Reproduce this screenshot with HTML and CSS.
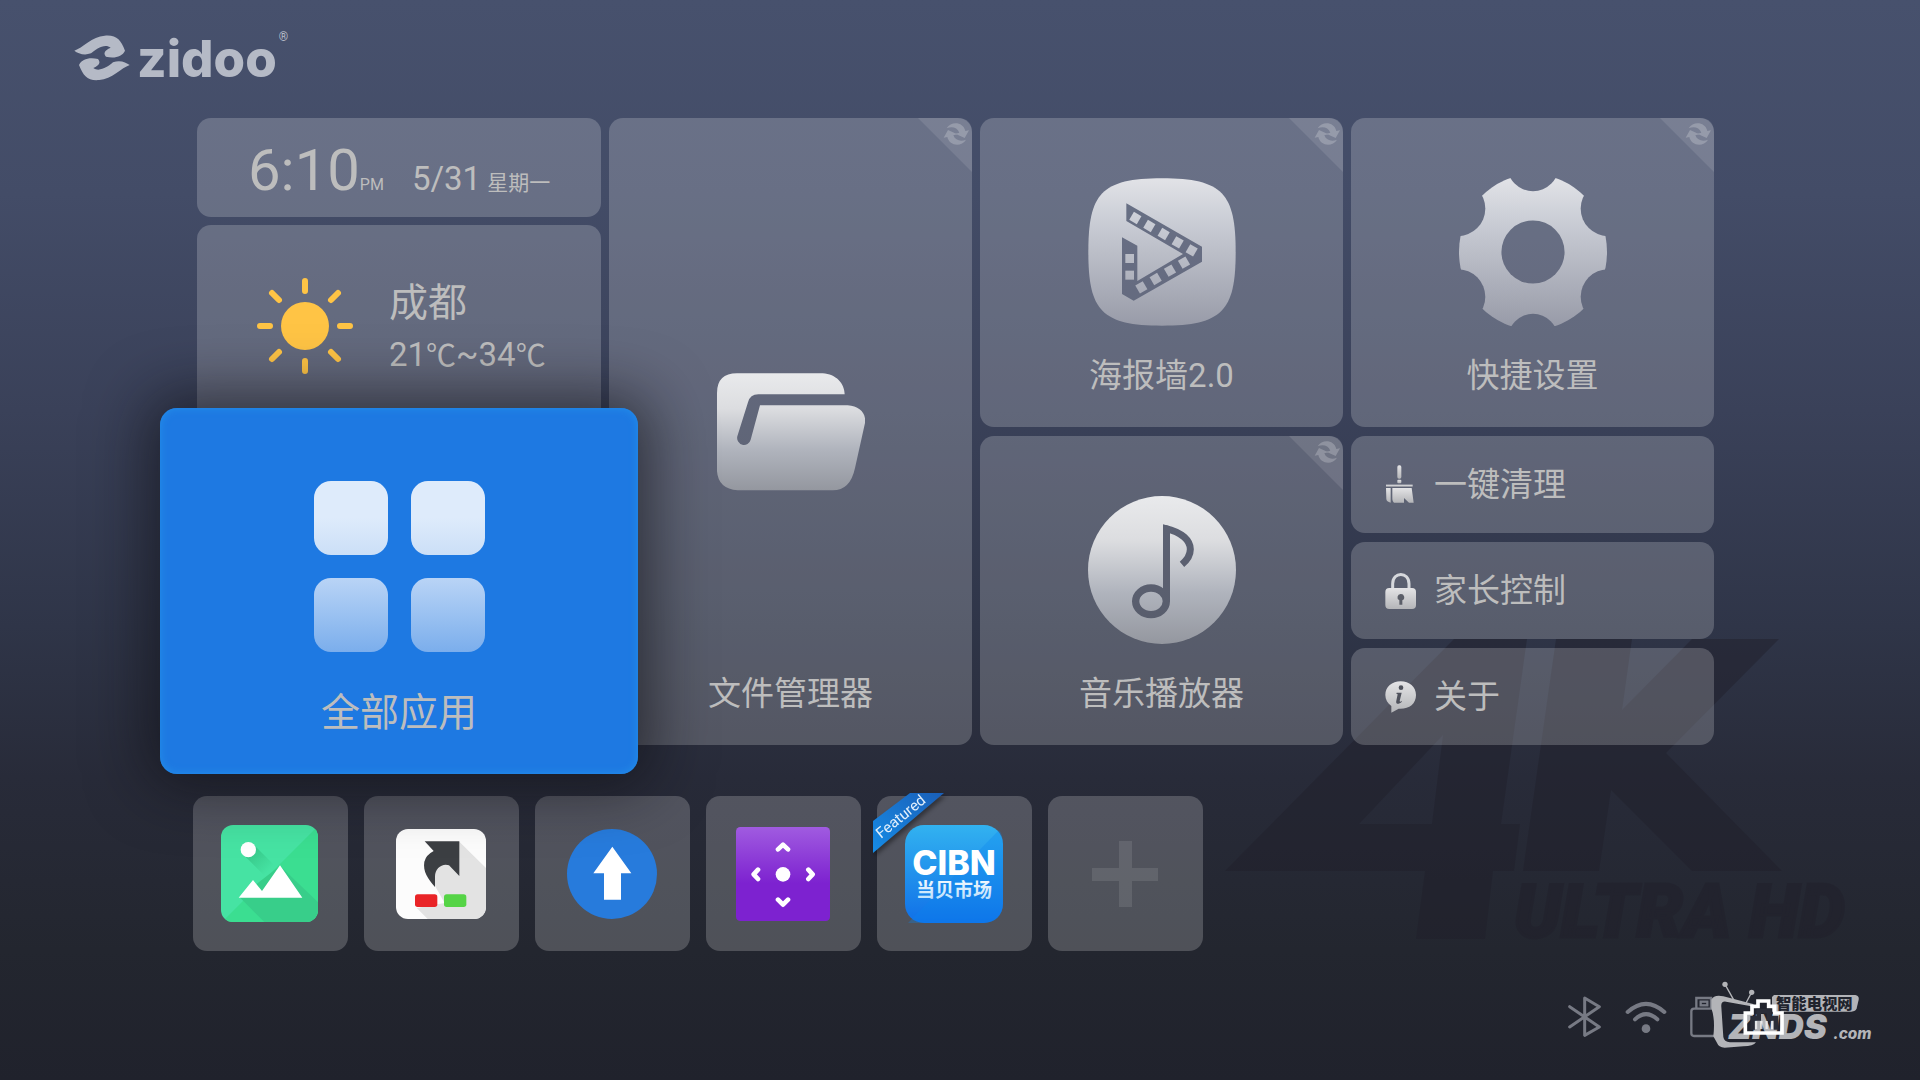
FILE: index.html
```html
<!DOCTYPE html>
<html lang="zh-CN">
<head>
<meta charset="utf-8">
<title>Zidoo</title>
<link rel="stylesheet" href="styles.css">
</head>
<body>
<svg class="defs" width="0" height="0" aria-hidden="true">
  <defs>
    <linearGradient id="metal" x1="0" y1="0" x2="0" y2="1">
      <stop offset="0" stop-color="#e2e3e7"/><stop offset=".25" stop-color="#cdd0d8"/><stop offset="1" stop-color="#989ba8"/>
    </linearGradient>
    <linearGradient id="silver" x1="0" y1="0" x2="0" y2="1">
      <stop offset="0" stop-color="#e9eaec"/><stop offset=".3" stop-color="#dcdde0"/><stop offset=".65" stop-color="#b0b4bd"/><stop offset="1" stop-color="#94979f"/>
    </linearGradient>
    <linearGradient id="small" x1="0" y1="0" x2="0" y2="1">
      <stop offset="0" stop-color="#e4e4e6"/><stop offset="1" stop-color="#b4b5b8"/>
    </linearGradient>
    <symbol id="sync" viewBox="0 0 162 162">
      <path class="sync-corner" d="M0 0H120Q162 0 162 44V162Z"/>
      <g class="sync-arrows">
        <path d="M86 31C100 8 136 12 142 39L153 37L140 60L112 47L124 44C118 28 101 24 86 31Z"/>
        <path d="M86 31C100 8 136 12 142 39L153 37L140 60L112 47L124 44C118 28 101 24 86 31Z" transform="rotate(180 115 48)"/>
      </g>
    </symbol>
  </defs>
</svg>

<svg class="backdrop" viewBox="0 0 670 340" aria-hidden="true">
  <path fill-rule="evenodd" d="M239 9H312L286 194H305L299 241H278L270 309H201L210 241H10ZM228 105L144 194H217Z"/>
  <path d="M341 9H417L407 80L477 9H564L451 123L567 241H477L396 160L384 241H308Z"/>
  <text x="299" y="307">ULTRA HD</text>
</svg>

<header class="brand">
  <svg class="brand-mark" viewBox="0 0 168 140" aria-hidden="true">
    <path d="M1 48C25 40 55 5 92 3C128 0 140 15 153 48C145 66 122 72 96 66C88 56 90 48 110 39C92 25 65 44 51 56C30 64 12 56 1 48Z"/>
    <path d="M167 91C143 99 113 134 76 136C40 139 28 124 15 91C23 73 46 67 72 73C80 83 78 91 58 100C76 114 103 95 117 83C138 75 156 83 167 91Z"/>
  </svg>
  <span class="brand-name">zidoo</span><span class="brand-reg">®</span>
</header>

<main>
  <section class="board">
    <div class="stack">
      <div class="card clock">
        <time class="clock-time">6:10</time><span class="clock-ampm">PM</span>
        <span class="clock-date">5/31</span><span class="clock-day">星期一</span>
      </div>
      <div class="card weather">
        <svg class="sun" viewBox="0 0 96 96" aria-hidden="true">
          <circle cx="48" cy="48" r="24"/>
          <path d="M48 3V13M48 83V93M3 48H13M83 48H93M15 15L22 22M74 74L81 81M81 15L74 22M22 74L15 81"/>
        </svg>
        <div class="weather-text"><span class="city">成都</span><span class="temp">21<span class="unit">℃</span>~34<span class="unit">℃</span></span></div>
      </div>
    </div>

    <button class="card tile tile-tall">
      <svg class="sync"><use href="#sync"/></svg>
      <svg class="folder" viewBox="108 101 444 352" aria-hidden="true"><path fill="url(#silver)" d="M108 160Q108 101 168 101H425C465 103 491 132 491 164H232Q207 164 201 188L169 290A20 20 0 0 0 209 300L237 197H500C535 199 556 220 552 250L522 385Q508 452 455 452H170Q112 448 108 395Z"/></svg>
      <span class="label">文件管理器</span>
    </button>

    <button class="card tile">
      <svg class="sync"><use href="#sync"/></svg>
      <svg class="icon" viewBox="0 0 444 444" aria-hidden="true">
        <mask id="film">
          <path fill="#fff" d="M222 1C405 1 443 48 443 222S405 443 222 443S1 396 1 222S39 1 222 1Z"/>
          <path fill="#000" d="M115 76L342 206V251L137 368L102 348V178L148 203V309L285 228L115 129Z"/>
          <g fill="#fff">
            <rect x="129" y="106" width="26" height="28" transform="rotate(30 142 120)"/>
            <rect x="171" y="130" width="26" height="28" transform="rotate(30 184 144)"/>
            <rect x="214" y="154" width="26" height="28" transform="rotate(30 227 168)"/>
            <rect x="256" y="179" width="26" height="28" transform="rotate(30 269 193)"/>
            <rect x="298" y="203" width="26" height="28" transform="rotate(30 311 217)"/>
            <rect x="275" y="240" width="26" height="28" transform="rotate(-30 288 254)"/>
            <rect x="233" y="264" width="26" height="28" transform="rotate(-30 246 278)"/>
            <rect x="190" y="289" width="26" height="28" transform="rotate(-30 203 303)"/>
            <rect x="147" y="314" width="26" height="28" transform="rotate(-30 160 328)"/>
            <rect x="112" y="228" width="26" height="27"/><rect x="112" y="278" width="26" height="27"/>
          </g>
        </mask>
        <rect width="444" height="444" fill="url(#metal)" mask="url(#film)"/>
      </svg>
      <span class="label">海报墙2.0</span>
    </button>

    <button class="card tile">
      <svg class="sync"><use href="#sync"/></svg>
      <svg class="icon" viewBox="-225 -225 450 450" aria-hidden="true">
        <mask id="gear" maskUnits="userSpaceOnUse" x="-230" y="-240" width="460" height="480">
          <ellipse rx="225" ry="236" fill="#fff"/>
          <circle r="96"/><circle cy="-264" r="79"/><circle cy="264" r="76"/>
          <circle cx="229" cy="-132" r="84"/><circle cx="229" cy="136" r="84"/>
          <circle cx="-229" cy="-132" r="84"/><circle cx="-229" cy="136" r="84"/>
        </mask>
        <rect x="-225" y="-225" width="450" height="450" fill="url(#metal)" mask="url(#gear)"/>
      </svg>
      <span class="label">快捷设置</span>
    </button>

    <button class="tile tile-focus">
      <svg class="grid-icon" viewBox="0 0 171 171" aria-hidden="true">
        <linearGradient id="g1" x1="0" y1="0" x2="0" y2="1"><stop offset=".5" stop-color="#deebfb"/><stop offset="1" stop-color="#cbdff7"/></linearGradient>
        <linearGradient id="g2" x1="0" y1="0" x2="0" y2="1"><stop offset="0" stop-color="#b9d4f6"/><stop offset="1" stop-color="#7baeec"/></linearGradient>
        <rect width="74" height="74" rx="17" fill="url(#g1)"/><rect x="97" width="74" height="74" rx="17" fill="url(#g1)"/>
        <rect y="97" width="74" height="74" rx="17" fill="url(#g2)"/><rect x="97" y="97" width="74" height="74" rx="17" fill="url(#g2)"/>
      </svg>
      <span class="label">全部应用</span>
    </button>

    <button class="card tile">
      <svg class="sync"><use href="#sync"/></svg>
      <svg class="icon" viewBox="381 197 444 444" aria-hidden="true">
        <mask id="note" maskUnits="userSpaceOnUse" x="381" y="197" width="444" height="444">
          <circle cx="603" cy="419" r="222" fill="#fff"/>
          <path d="M606 282L627 288V513H606Z"/>
          <path d="M612 294C665 306 688 332 688 357C688 374 680 388 663 402" fill="none" stroke="#000" stroke-width="21"/>
          <ellipse cx="570" cy="513" rx="46" ry="40" fill="none" stroke="#000" stroke-width="22"/>
        </mask>
        <rect x="381" y="197" width="444" height="444" fill="url(#silver)" mask="url(#note)"/>
      </svg>
      <span class="label">音乐播放器</span>
    </button>

    <div class="shortcuts">
      <button class="card shortcut">
        <svg viewBox="0 0 96 120" aria-hidden="true"><g fill="url(#small)"><rect x="37" y="1" width="12" height="40" rx="5"/><rect x="37" y="44" width="12" height="11" rx="3"/><rect x="3" y="59" width="80" height="6"/><path d="M3 69H17V113C9 111 4 108 4 102ZM22 69H80L86 113H72L57 99V113H27C22 109 22 102 22 98Z"/></g></svg>
        <span>一键清理</span>
      </button>
      <button class="card shortcut">
        <svg viewBox="0 0 96 120" aria-hidden="true"><path d="M23 58V38C23 1 72 1 72 38V58" fill="none" stroke="#d6d8dc" stroke-width="9"/><rect x="1" y="51" width="92" height="63" rx="12" fill="url(#small)"/><path d="M47 69A10 10 0 0 1 52 88V101H43V88A10 10 0 0 1 47 69Z" fill="#5b5e68"/></svg>
        <span>家长控制</span>
      </button>
      <button class="card shortcut">
        <svg viewBox="0 0 96 120" aria-hidden="true"><path d="M47 13C73 13 93 29 93 54C93 82 71 97 41 95L19 107V87C8 79 1 68 1 54C1 29 21 13 47 13Z" fill="url(#small)"/><circle cx="48" cy="32" r="7" fill="#4f525c"/><path d="M35 47H50L44 72Q45 77 51 71L50 75C40 84 31 81 34 71L38 52L34 50Z" fill="#4f525c"/></svg>
        <span>关于</span>
      </button>
    </div>
  </section>

  <nav class="dock" aria-label="Apps">
    <button class="card app" aria-label="Gallery">
      <svg width="97" height="97" viewBox="0 0 291 291">
        <clipPath id="c1"><rect width="291" height="291" rx="36"/></clipPath>
        <linearGradient id="s1" gradientUnits="userSpaceOnUse" x1="90" y1="80" x2="145" y2="135"><stop stop-color="#37c98a"/><stop offset="1" stop-color="#37c98a" stop-opacity="0"/></linearGradient>
        <g clip-path="url(#c1)"><rect width="291" height="291" fill="#46e3a3"/><path d="M291 3V291H3Z" fill="#3bde91"/>
          <path d="M99 60L160 121L130 152L66 88Z" fill="url(#s1)"/><path d="M177 122L291 232V291H130L56 217Z" fill="#38ce8a"/></g>
        <circle cx="82" cy="74" r="23" fill="#fff"/><path d="M53 218L96 165L123 198L177 121L244 218Z" fill="#fff"/>
      </svg>
    </button>
    <button class="card app" aria-label="Switch">
      <svg width="90" height="90" viewBox="0 0 270 270">
        <clipPath id="c2"><rect width="270" height="270" rx="36"/></clipPath>
        <g clip-path="url(#c2)"><rect width="270" height="270" fill="#fcfcfc"/><path d="M190 38L270 117V270H95L62 237L142 218L117 173L110 120Z" fill="#e3e3e3"/><path d="M57 232L117 171L146 222L62 237Z" fill="#fcfcfc"/></g>
        <path d="M86 37H190V141L159 109C138 102 117 119 117 142V174C96 149 80 128 85 98Q90 78 113 66Z" fill="#3c3f43"/>
        <rect x="57" y="196" width="67" height="38" rx="8" fill="#e92427"/><rect x="144" y="196" width="67" height="38" rx="8" fill="#55d446"/>
      </svg>
    </button>
    <button class="card app" aria-label="Upload">
      <svg width="90" height="90" viewBox="0 0 270 270"><circle cx="135" cy="135" r="135" fill="#277bdc"/><path d="M136 53L193 133H162V212H111V133H79Z" fill="#fff"/></svg>
    </button>
    <button class="card app" aria-label="Remote">
      <svg width="94" height="94" viewBox="0 0 282 282">
        <linearGradient id="p" x1="0" y1="0" x2="0" y2="1"><stop stop-color="#a05be0"/><stop offset=".6" stop-color="#7d22d0"/></linearGradient>
        <rect width="282" height="282" rx="13" fill="url(#p)"/><circle cx="141" cy="142" r="22" fill="#fff"/>
        <path d="M126 67L141 53L156 67M126 218L141 233L156 218M66 128L53 142L66 156M217 128L230 142L217 156" fill="none" stroke="#fff" stroke-width="14" stroke-linecap="round" stroke-linejoin="round"/>
      </svg>
    </button>
    <button class="card app">
      <svg class="cibn" width="98" height="98" viewBox="0 0 98 98">
        <linearGradient id="b" x1="0" y1="0" x2="0" y2="1"><stop stop-color="#32b2f0"/><stop offset="1" stop-color="#1070e8"/></linearGradient>
        <linearGradient id="t" x1="0" y1="0" x2="0" y2="1"><stop stop-color="#fff"/><stop offset="1" stop-color="#b5dcfb"/></linearGradient>
        <rect width="98" height="98" rx="19" fill="url(#b)"/><path d="M94 5Q98 10 98 19V79Q97 97 79 98H3Z" fill="#0b86ee" opacity=".3"/>
        <text class="cibn-name" x="49" y="50" text-anchor="middle">CIBN</text>
        <text class="cibn-sub" x="49" y="72" text-anchor="middle" fill="url(#t)">当贝市场</text>
      </svg>
      <svg class="ribbon" width="72" height="62" viewBox="0 0 72 62">
        <linearGradient id="r" x1="0" y1="1" x2="1" y2="0"><stop stop-color="#168ce6"/><stop offset="1" stop-color="#1a5fb8"/></linearGradient>
        <path d="M0 28L37 0H71L0 60Z" fill="url(#r)"/>
        <text transform="translate(8 46) rotate(-39)">Featured</text>
      </svg>
    </button>
    <button class="card app" aria-label="Add">
      <svg width="66" height="66" viewBox="0 0 66 66"><path class="plus" d="M27 0H40V27H66V40H40V66H27V40H0V27H27Z"/></svg>
    </button>
  </nav>
</main>

<footer class="status">
  <svg width="34" height="42" viewBox="0 0 102 126" aria-label="Bluetooth"><path d="M5 32L94 93L50 118V6L94 32L5 93" fill="none" stroke="#777a84" stroke-width="9" stroke-linejoin="round" stroke-linecap="round"/></svg>
  <svg width="42" height="42" viewBox="0 0 126 126" aria-label="Wi-Fi"><g fill="none" stroke="#777a84" stroke-width="12" stroke-linecap="round"><path d="M8 48Q63 -1 118 48"/><path d="M30 70Q63 39 97 70"/></g><circle cx="63" cy="98" r="13" fill="#777a84"/></svg>
  <svg width="28" height="42" viewBox="0 0 84 126" aria-label="USB"><g fill="none" stroke="#777a84" stroke-width="7"><path d="M19 38V6H63V38"/><rect x="4" y="38" width="74" height="82" rx="8"/><rect x="32" y="17" width="20" height="11"/></g></svg>
  <div class="watermark">
    <svg width="168" height="72" viewBox="0 0 504 216" aria-label="ZNDS.com">
      <g fill="#b3b4b8">
        <circle cx="45" cy="16" r="8"/><circle cx="125" cy="40" r="8"/>
        <path d="M45 16L72 64M125 40L108 72" stroke="#b3b4b8" stroke-width="4"/>
        <path d="M4 62Q12 46 40 52L132 76L124 82L48 68Q32 66 34 84L40 174Q42 188 60 190L138 190Q130 202 100 202L44 206Q26 206 20 190L10 172Q16 120 4 88Z"/>
        <path d="M192 48H436Q448 50 446 62L440 88Q437 98 424 98H186V54Z"/>
      </g>
      <text class="wm-cn" x="198" y="89">智能电视网</text>
      <text class="wm-main" x="54" y="180">ZNDS</text>
      <text class="wm-com" x="370" y="180">.com</text>
      <path d="M106 162V102H126V82H144V66H176V82H194V102H216V162Z" fill="none" stroke="#fff" stroke-width="11"/>
      <path d="M128 152V118H146V96H177V118H198V152" fill="none" stroke="#2a2d38" stroke-width="14"/>
      <path d="M138 150V126M154 150V126M170 150V126M186 150V126" stroke="#fff" stroke-width="7" opacity=".7"/>
    </svg>
  </div>
</footer>
</body>
</html>
```
FILE: styles.css
```css
* { box-sizing: border-box; }

body {
  margin: 0;
  min-height: 100vh;
  position: relative;
  overflow-x: hidden;
  display: flex;
  flex-direction: column;
  color: #bdbdbd;
  font-family: Roboto, "Noto Sans CJK SC", sans-serif;
  background: linear-gradient(#47516d 0, #434c67 18%, #3a4159 38%, #2f3548 58%, #282b39 72%, #23262f 88%, #20222c 100%);
}

button {
  border: 0;
  padding: 0;
  color: inherit;
  font: inherit;
  cursor: pointer;
}

svg { display: block; flex: none; }
.defs { position: absolute; }

.backdrop {
  position: absolute;
  right: 35px;
  bottom: 110px;
  width: 670px;
  height: 340px;
  fill: #201f2a;
  stroke: #201f2a;
  stroke-width: 0;
  opacity: .45;
}
.backdrop text {
  font: italic 900 73px Roboto, sans-serif;
  stroke-width: 3px;
}

.brand {
  height: 118px;
  padding: 33px 0 0 74px;
  display: flex;
  align-items: flex-start;
  color: #b5bac6;
}
.brand-mark { width: 56px; height: 50px; fill: #b5bac6; }
.brand-name {
  margin-left: 7px;
  font: 800 51px/52px Inter, sans-serif;
}
.brand-reg { font-size: 12px; line-height: 8px; margin-left: 2px; }

.board {
  position: relative;
  display: grid;
  grid-template-columns: 404fr 363fr 363fr 363fr;
  grid-auto-rows: minmax(309px, auto);
  gap: 9px 8px;
  padding: 0 206px 0 197px;
}

.card {
  position: relative;
  border-radius: 14px;
  background: rgba(255, 255, 255, .2);
}

.stack { display: flex; flex-direction: column; gap: 8px; }

.clock {
  height: 99px;
  padding: 18px 0 0 51px;
  display: flex;
  align-items: baseline;
}
.clock-time { font-size: 58px; line-height: 68px; }
.clock-ampm { font-size: 16px; }
.clock-date { font-size: 33px; margin-left: 28px; }
.clock-day { font-size: 21px; margin-left: 6px; }

.weather {
  flex: 1;
  display: flex;
  align-items: center;
  gap: 36px;
  padding-left: 60px;
}
.sun { width: 96px; height: 96px; fill: #ffc445; }
.sun path { stroke: #ffc445; stroke-width: 6; stroke-linecap: round; }
.weather-text { display: flex; flex-direction: column; padding-top: 6px; }
.city { font-size: 39px; line-height: 52px; }
.temp { font-size: 33px; line-height: 52px; }
.unit { font-size: 30px; line-height: 1; }

.tile {
  display: flex;
  flex-direction: column;
  align-items: center;
  padding: 60px 0 31px;
}
.label { margin-top: auto; font-size: 33px; line-height: 40px; }
.icon { width: 148px; height: 148px; }

.tile-tall { grid-row: span 2; padding-top: 72px; }
.folder { width: 148px; height: 118px; margin: auto 0; }
.tile-tall .label { margin-top: 0; }

.sync {
  position: absolute;
  top: 0;
  right: 0;
  width: 54px;
  height: 54px;
}
.sync-corner { fill: rgba(255, 255, 255, .1); }
.sync-arrows { fill: rgba(255, 255, 255, .22); }

.tile-focus {
  position: relative;
  z-index: 1;
  margin: -28px -37px -29px;
  padding: 73px 0 37px;
  border-radius: 17px;
  background: #1e79e2;
  box-shadow: inset 0 0 8px #2390ea, 0 0 60px 12px rgba(14, 14, 18, .6);
}
.grid-icon { width: 171px; height: 171px; }
.tile-focus .label { font-size: 39px; line-height: 48px; }

.shortcuts {
  display: grid;
  grid-auto-rows: 1fr;
  gap: 9px;
}
.shortcut {
  display: flex;
  align-items: center;
  gap: 17px;
  padding-left: 34px;
  font-size: 33px;
  line-height: 40px;
}
.shortcut svg { width: 32px; height: 40px; }

.dock {
  display: flex;
  gap: 16px;
  padding: 51px 193px 0;
}
.app {
  width: 155px;
  height: 155px;
  padding-right: 2px;
  display: flex;
  align-items: center;
  justify-content: center;
}
.plus { fill: rgba(255, 255, 255, .1); }
.cibn-name { font: 800 34px Inter, sans-serif; fill: #fff; }
.cibn-sub { font: 700 19px "Noto Sans CJK SC", sans-serif; }
.ribbon {
  position: absolute;
  left: -4px;
  top: -3px;
  filter: drop-shadow(2px 3px 2px rgba(0, 0, 0, .4));
}
.ribbon text { font: 15px Roboto, sans-serif; fill: #e3f0fc; }

.status {
  position: relative;
  display: flex;
  justify-content: flex-end;
  align-items: center;
  gap: 23px;
  padding: 45px 202px 0 0;
}
.watermark {
  position: absolute;
  right: 42px;
  top: 28px;
}
.watermark text { fill: #b3b4b8; }
.watermark .wm-cn { font: 900 46px "Noto Sans CJK SC", sans-serif; fill: #20232d; }
.watermark .wm-main { font: italic 900 104px Inter, sans-serif; }
.watermark .wm-com { font: italic 800 46px Inter, sans-serif; }
```
